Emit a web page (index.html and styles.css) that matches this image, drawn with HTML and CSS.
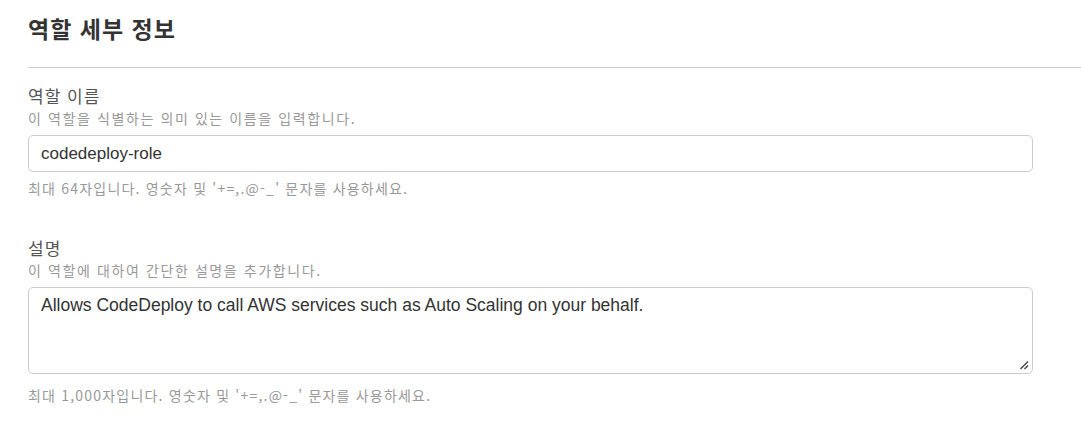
FILE: index.html
```html
<!DOCTYPE html>
<html lang="ko">
<head>
<meta charset="utf-8">
<link rel="stylesheet" href="styles.css">
</head>
<body>
<div class="page">
  <h2 class="title">역할 세부 정보</h2>
  <div class="rule"></div>
  <div class="field">
    <div class="label">역할 이름</div>
    <div class="desc">이 역할을 식별하는 의미 있는 이름을 입력합니다.</div>
    <div class="input">codedeploy-role</div>
    <div class="help">최대 64자입니다. 영숫자 및 '+=,.@-_' 문자를 사용하세요.</div>
  </div>
  <div class="field second">
    <div class="label">설명</div>
    <div class="desc">이 역할에 대하여 간단한 설명을 추가합니다.</div>
    <div class="textarea">
      <span class="tatext">Allows CodeDeploy to call AWS services such as Auto Scaling on your behalf.</span>
      <svg class="grip" width="10" height="10" viewBox="0 0 10 10"><path d="M1.5 9 L9 1.5 M5.5 9 L9 5.5" stroke="#444" stroke-width="1.4" fill="none"/></svg>
    </div>
    <div class="help">최대 1,000자입니다. 영숫자 및 '+=,.@-_' 문자를 사용하세요.</div>
  </div>
</div>
</body>
</html>
```
FILE: styles.css
```css
html, body { margin: 0; padding: 0; background: #fff; }
body { font-family: "Liberation Sans", Arial, "Noto Sans CJK KR", sans-serif; color: #333; }
.page { padding-left: 28px; width: 1053px; }
.title { margin: 0; padding-top: 12px; font-size: 23px; letter-spacing: 1px; font-weight: bold; line-height: 32px; color: #333; font-family: "Noto Sans CJK KR", sans-serif; }
.rule { height: 1px; background: #ccc; margin-top: 23px; }
.field { margin-top: 16px; }
.field.second { margin-top: 39px; }
.label { font-family: "Noto Sans CJK KR", sans-serif; font-size: 17px; letter-spacing: 1px; line-height: 24px; color: #555; }
.desc { font-family: "Noto Sans CJK KR", sans-serif; font-size: 14px; letter-spacing: 1.6px; line-height: 18px; color: #999; margin-top: 1px; }
.input { box-sizing: border-box; margin-top: 8px; width: 1005px; height: 37px; border: 1px solid #ccc; border-radius: 5px; padding: 0 12px; font-size: 17px; line-height: 35px; color: #333; }
.help { font-family: "Noto Sans CJK KR", sans-serif; font-size: 14px; letter-spacing: 1.2px; line-height: 18px; color: #999; margin-top: 7px; }
.textarea { position: relative; box-sizing: border-box; margin-top: 8px; width: 1005px; height: 87px; border: 1px solid #ccc; border-radius: 5px; padding: 5px 12px; font-size: 17.5px; line-height: 24px; color: #333; }
.grip { position: absolute; right: 3px; bottom: 3px; }
.second .help { margin-top: 12px; }
```
